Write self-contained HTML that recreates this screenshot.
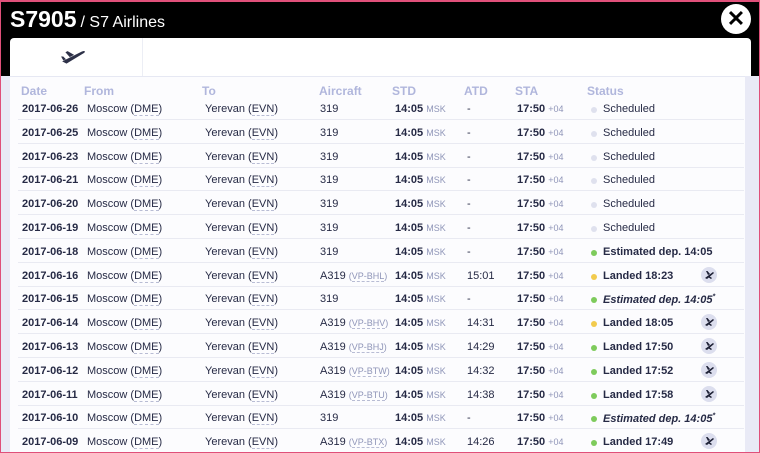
<!DOCTYPE html>
<html><head><style>
*{margin:0;padding:0;box-sizing:border-box}
body{width:760px;height:453px;overflow:hidden;background:#e9eaf6;font-family:"Liberation Sans",sans-serif;position:relative;color:#262a45}
.frame{position:absolute;inset:0;border:1px solid #e0507a;border-top:2px solid #e0507a;pointer-events:none;z-index:10}
.top{position:absolute;left:0;top:0;width:760px;height:76px;background:#000}
.title{position:absolute;left:10px;top:6px;color:#fff;font-size:23px;font-weight:bold}
.title span{font-size:16px;font-weight:normal;margin-left:4px}
.close{position:absolute;left:721px;top:4px;width:30px;height:30px;border-radius:50%;background:#fff;color:#000;font-size:22px;font-weight:bold;text-align:center;line-height:30px}
.tabs{position:absolute;left:10px;top:38px;width:741px;height:38px;background:#fff;border-radius:4px 4px 0 0}
.tab1{position:absolute;left:0;top:0;width:133px;height:38px;border-right:1px solid #eceef5}
.panel{position:absolute;left:10px;top:76px;width:735px;height:377px;background:#fcfcfe;border-top:1px solid #e6e8f3}
.hd{position:absolute;top:84px;font-size:12px;color:#b0b6dc;font-weight:bold}
.row{position:absolute;left:18px;width:726px;height:24px;border-bottom:1px solid #e9eaf2;font-size:11px}
.row div{position:absolute;top:7px;white-space:nowrap}
.d{font-weight:bold}
.u{border-bottom:1px dashed #b8bcd4}
.g{color:#8f95b8;font-size:9px}
.dot{width:6px;height:6px;border-radius:50%;top:11px!important}
.ic{width:16px;height:16px;border-radius:50%;background:#dcdeee;top:4px!important}
</style></head><body>
<div class="top"></div>
<div class="title">S7905<span>/ S7 Airlines</span></div>
<div class="close">✕</div>
<div class="tabs"><div class="tab1">
<svg style="position:absolute;left:50px;top:9px" width="26" height="18" viewBox="0 0 24 16"><path d="M2 13 L20 4 Q24 2.5 22.5 5 L6 15 Z M9 9 L13 7 L7 3.5 L5 4.5 Z M3 12 L1 8.5 L3 8.5 L5.5 11 Z" fill="#2d3148"/></svg>
</div></div>
<div class="panel"></div>
<div class="hd" style="left:21px">Date</div><div class="hd" style="left:84px">From</div><div class="hd" style="left:202px">To</div><div class="hd" style="left:319px">Aircraft</div><div class="hd" style="left:392px">STD</div><div class="hd" style="left:464px">ATD</div><div class="hd" style="left:515px">STA</div><div class="hd" style="left:587px">Status</div>
<div id="rows"></div>
<script>
var R=[["26","319","-","s","Scheduled"],["25","319","-","s","Scheduled"],["23","319","-","s","Scheduled"],["21","319","-","s","Scheduled"],["20","319","-","s","Scheduled"],["19","319","-","s","Scheduled"],["18","319","-","g","Estimated dep. 14:05"],["16","A319|VP-BHL","15:01","y","Landed 18:23",1],["15","319","-","g","<i>Estimated dep. 14:05<sup style='font-size:7px'>*</sup></i>"],["14","A319|VP-BHV","14:31","y","Landed 18:05",1],["13","A319|VP-BHJ","14:29","g","Landed 17:50",1],["12","A319|VP-BTW","14:32","g","Landed 17:52",1],["11","A319|VP-BTU","14:38","g","Landed 17:58",1],["10","319","-","g","<i>Estimated dep. 14:05<sup style='font-size:7px'>*</sup></i>"],["09","A319|VP-BTX","14:26","g","Landed 17:49",1]];
var h="",c={s:"#dfe1ee",g:"#7ecb5c",y:"#f2cb4e"};
var pl='<svg width="16" height="16" viewBox="0 0 16 16"><path d="M4 11 L12 5 L13 6 L6 12 Z M7 8 L5 4 L6.5 4 L9 7 Z M8 9 L11 11 L10 12 L7 10 Z" fill="#1d2035"/></svg>';
R.forEach(function(r,i){var a=r[1].split("|");var ac=a[1]?a[0]+' <span class="g">(<span class="u">'+a[1]+'</span>)</span>':a[0];
h+='<div class="row" style="top:'+(96+i*23.8)+'px"><div class="d" style="left:4px">2017-06-'+r[0]+'</div><div style="left:69px">Moscow (<span class="u">DME</span>)</div><div style="left:187px">Yerevan (<span class="u">EVN</span>)</div><div style="left:302px">'+ac+'</div><div style="left:377px"><b>14:05</b> <span class="g">MSK</span></div><div style="left:449px">'+r[2]+'</div><div style="left:499px"><b>17:50</b> <span class="g">+04</span></div><div class="dot" style="left:573px;background:'+c[r[3]]+'"></div><div style="left:585px;'+(r[3]=="s"?'':'font-weight:bold')+'">'+r[4]+'</div>'+(r[5]?'<div class="ic" style="left:683px">'+pl+'</div>':'')+'</div>';});
document.getElementById("rows").innerHTML=h;
</script>
<div class="frame"></div>
</body></html>
